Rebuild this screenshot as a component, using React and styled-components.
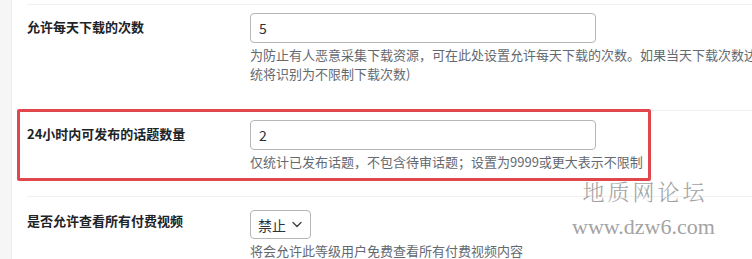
import React from "react";
import styled, { createGlobalStyle } from "styled-components";

const Global = createGlobalStyle`
  html, body { margin: 0; padding: 0; background: #fff; overflow: hidden; }
  body { font-family: "Noto Sans CJK SC", "Noto Sans", sans-serif; color: #1d2327; }
  * { box-sizing: border-box; }
`;

const Page = styled.div`
  display: flex;
  width: 752px;
  height: 259px;
  overflow: hidden;
  position: relative;
`;

const Strip = styled.div`
  flex: 0 0 12px;
  background: #f6f6f7;
  border-right: 1px solid #ececec;
`;

const Main = styled.div`
  flex: 1;
  padding: 4px 0 0 15px;
  min-width: 0;
`;

const Row = styled.div`
  position: relative;
  display: grid;
  grid-template-columns: 223px 1fr;
  border-top: 1px solid #f0f0f1;
  padding: ${(p) => p.$pt}px 0 ${(p) => p.$pb}px 0;
`;

const Label = styled.div`
  padding-top: 5px;
  font-size: 13px;
  line-height: 18px;
  font-weight: 700;
  color: #1d2327;
  white-space: nowrap;
`;

const Field = styled.div`
  display: flex;
  flex-direction: column;
  align-items: flex-start;
  min-width: 0;
`;

const Input = styled.input`
  width: 346px;
  height: 30px;
  border: 1px solid #b4b6ba;
  border-radius: 4px;
  padding: 0 8px;
  font-family: "Noto Sans CJK SC", "Noto Sans", sans-serif;
  font-size: 14px;
  color: #2c3338;
  background: #fff;
  outline: none;
`;

const Select = styled.div`
  margin-top: 3px;
  height: 29px;
  width: 61px;
  flex-shrink: 0;
  border: 1px solid #b4b6ba;
  border-radius: 4px;
  display: flex;
  align-items: center;
  gap: 6px;
  padding: 0 0 0 7px;
  font-size: 14px;
  color: #2c3338;
  white-space: nowrap;
`;

const Desc = styled.p`
  margin: 2px 0 0;
  font-size: 13px;
  line-height: 19px;
  color: #646970;
  white-space: nowrap;
`;

const Highlight = styled.div`
  position: absolute;
  left: -10px;
  top: -2px;
  width: 634px;
  height: 72px;
  border: 3px solid #e1474d;
  border-radius: 2px;
  pointer-events: none;
`;

const Watermark = styled.div`
  position: absolute;
  left: 572px;
  top: 176px;
  display: flex;
  flex-direction: column;
  align-items: center;
  color: #a3a3a3;
  pointer-events: none;
`;

const WmCn = styled.div`
  font-family: "Noto Serif CJK SC", "AR PL UKai CN", "Noto Sans CJK SC", serif;
  font-size: 22px;
  line-height: 30px;
  letter-spacing: 3px;
  font-weight: 300;
  margin-left: 3px;
`;

const WmEn = styled.div`
  margin-top: 8px;
  font-family: "Liberation Serif", "Times New Roman", serif;
  font-size: 22px;
  line-height: 26px;
`;

const Chevron = () => (
  <svg width="10" height="7" viewBox="0 0 10 7" fill="none" style={{ flexShrink: 0 }}>
    <path d="M1 1.5 L5 5.5 L9 1.5" stroke="#3c434a" strokeWidth="1.4" strokeLinecap="round" strokeLinejoin="round" />
  </svg>
);

export default function App() {
  return (
    <>
      <Global />
      <Page>
        <Strip />
        <Main>
          <Row $pt={8} $pb={27}>
            <Label>允许每天下载的次数</Label>
            <Field>
              <Input defaultValue="5" />
              <Desc>
                为防止有人恶意采集下载资源，可在此处设置允许每天下载的次数。如果当天下载次数达到上限则无法继续下载（设置为0时系
                <br />
                统将识别为不限制下载次数)
              </Desc>
            </Field>
          </Row>
          <Row $pt={9} $pb={25}>
            <Highlight />
            <Label>24小时内可发布的话题数量</Label>
            <Field>
              <Input defaultValue="2" />
              <Desc>仅统计已发布话题，不包含待审话题；设置为9999或更大表示不限制</Desc>
            </Field>
          </Row>
          <Row $pt={10} $pb={10}>
            <Label>是否允许查看所有付费视频</Label>
            <Field>
              <Select>
                <span>禁止</span>
                <Chevron />
              </Select>
              <Desc>将会允许此等级用户免费查看所有付费视频内容</Desc>
            </Field>
          </Row>
        </Main>
        <Watermark>
          <WmCn>地质网论坛</WmCn>
          <WmEn>www.dzw6.com</WmEn>
        </Watermark>
      </Page>
    </>
  );
}
